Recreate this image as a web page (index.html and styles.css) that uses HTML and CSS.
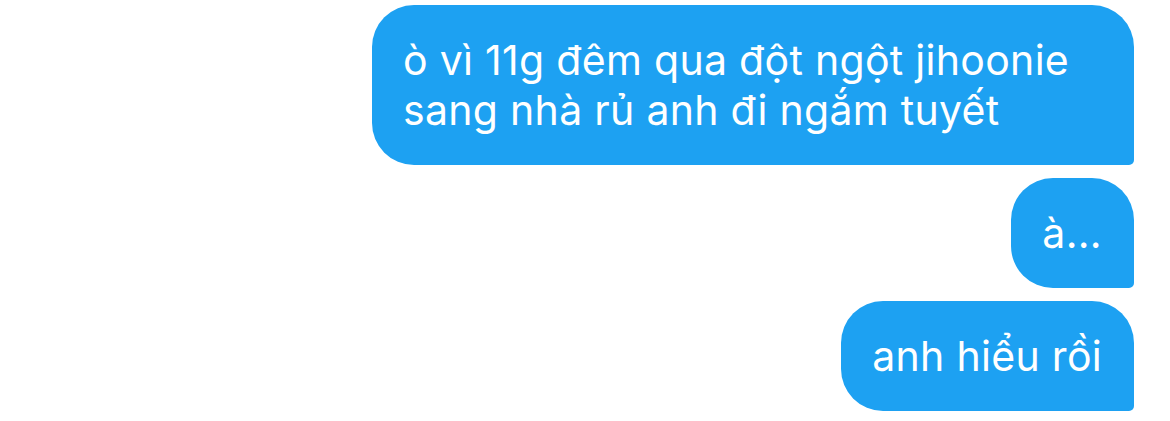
FILE: index.html
```html
<!DOCTYPE html>
<html lang="vi">
<head>
  <meta charset="UTF-8">
  <title>Chat</title>
  <link rel="stylesheet" href="styles.css">
</head>
<body>

<div class="thread">
  <div class="bubble">ò vì 11g đêm qua đột ngột jihoonie sang nhà rủ anh đi ngắm tuyết</div>
  <div class="bubble">à...</div>
  <div class="bubble">anh hiểu rồi</div>
</div>

</body>
</html>
```

FILE: styles.css
```css
body {
  margin: 0;
  background: #fff;
  font-family: Inter, "Noto Sans", sans-serif;
}
.thread {
  display: flex;
  flex-direction: column;
  align-items: flex-end;
  gap: 13px;
  padding: 5px 36px 0 0;
}
.bubble {
  box-sizing: border-box;
  max-width: 762px;
  background-color: #1da1f2;
  color: #fff;
  font-size: 41px;
  letter-spacing: 0.3px;
  line-height: 50px;
  padding: 30px 32px 30px 31px;
  border-radius: 42px 42px 5px 42px;
}
```
